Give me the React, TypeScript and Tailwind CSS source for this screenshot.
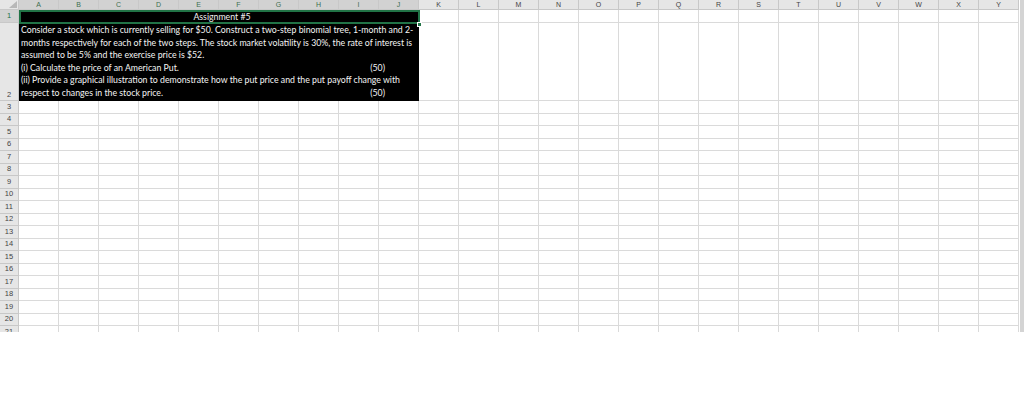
import React from "react";

const COLS = ["A","B","C","D","E","F","G","H","I","J","K","L","M","N","O","P","Q","R","S","T","U","V","W","X","Y"];

function RowHeader({ n, h, selected, bottom }: { n: number; h: string; selected?: boolean; bottom?: boolean }) {
  return (
    <div
      className={`w-[19px] shrink-0 flex justify-center border-r border-b border-[#c8c8c8] ${h} ${selected ? "bg-[#d2d2d2] text-[#217346]" : "bg-[#e6e6e6] text-[#444]"} ${bottom ? "items-end" : "items-center"}`}
    >
      <span className="text-[7.5px] leading-[10px]">{n}</span>
    </div>
  );
}

function Cells({ from, h }: { from: number; h: string }) {
  return (
    <>
      {COLS.slice(from).map((c) => (
        <div key={c} className={`w-[40px] shrink-0 border-r border-b border-[#dadada] ${h}`} />
      ))}
    </>
  );
}

export default function App() {
  const rows = Array.from({ length: 19 }, (_, i) => i + 3);
  return (
    <div className="w-[1024px] h-[406px] bg-white overflow-hidden" style={{ fontFamily: '"Liberation Sans", Arial, sans-serif' }}>
      <div className="h-[332px] overflow-hidden flex">
        <div className="flex flex-col w-[1019px]">
          {/* column headers */}
          <div className="flex h-[10px] shrink-0">
            <div className="w-[19px] shrink-0 bg-[#e6e6e6] border-r border-b border-[#c8c8c8] relative">
              <svg width="8" height="7" className="absolute right-[1px] bottom-[1px]">
                <polygon points="8,0 8,7 0,7" fill="#b8b8b8" />
              </svg>
            </div>
            {COLS.map((c, i) => (
              <div
                key={c}
                className={`w-[40px] shrink-0 flex items-center justify-center border-r border-b border-[#c8c8c8] ${i < 10 ? "bg-[#d2d2d2] text-[#3c6e4f]" : "bg-[#e6e6e6] text-[#444]"}`}
              >
                <span className="text-[7px] leading-[10px]">{c}</span>
              </div>
            ))}
          </div>
          {/* row 1 */}
          <div className="flex h-[13px] shrink-0">
            <RowHeader n={1} h="h-[13px]" selected />
            <div className="w-[400px] shrink-0 h-[13px] bg-black relative flex items-center justify-center">
              <span className="text-[8.75px] text-[#f0f0f0] leading-[12px] pl-[6px]" style={{ fontFamily: 'Lato, "Liberation Sans", sans-serif' }}>Assignment #5</span>
              <div className="absolute left-0 top-0 w-[401px] h-[14px] border-2 border-[#217346]" />
              <div className="absolute right-[-3px] bottom-[-4px] w-[5px] h-[5px] bg-[#217346] border border-white" />
            </div>
            <Cells from={10} h="h-[13px]" />
          </div>
          {/* row 2 */}
          <div className="flex h-[78px] shrink-0">
            <RowHeader n={2} h="h-[78px]" bottom />
            <div
              className="w-[400px] shrink-0 h-[78px] bg-black text-[#f4f4f4] text-[8.75px] leading-[12.6px] pl-[2px] pt-[1px] whitespace-nowrap"
              style={{ fontFamily: 'Lato, "Liberation Sans", sans-serif' }}
            >
              <div>Consider a stock which is currently selling for $50. Construct a two-step binomial tree, 1-month and 2-</div>
              <div>months respectively for each of the two steps. The stock market volatility is 30%, the rate of interest is</div>
              <div>assumed to be 5% and the exercise price is $52.</div>
              <div className="flex justify-between pr-[34px]">
                <span>(i) Calculate the price of an American Put.</span>
                <span>(50)</span>
              </div>
              <div>(ii) Provide a graphical illustration to demonstrate how the put price and the put payoff change with</div>
              <div className="flex justify-between pr-[34px]">
                <span>respect to changes in the stock price.</span>
                <span>(50)</span>
              </div>
            </div>
            <Cells from={10} h="h-[78px]" />
          </div>
          {rows.map((n) => (
            <div key={n} className="flex h-[12.5px] shrink-0">
              <RowHeader n={n} h="h-[12.5px]" />
              <Cells from={0} h="h-[12.5px]" />
            </div>
          ))}
        </div>
        <div className="w-[1px] bg-white" />
        <div className="w-[4px] bg-[#d4d4d4]" />
      </div>
    </div>
  );
}
